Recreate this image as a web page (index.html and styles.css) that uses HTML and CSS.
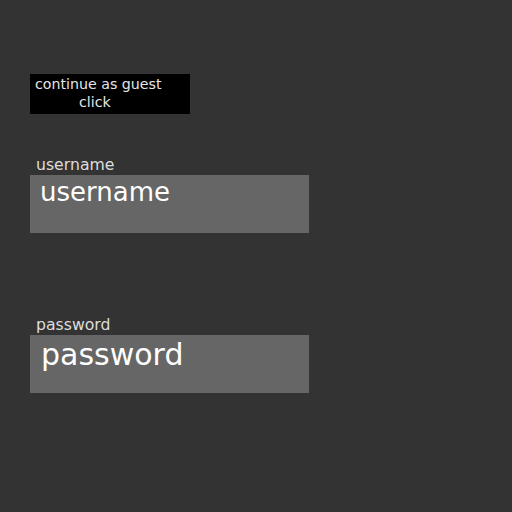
FILE: index.html
```html
<!DOCTYPE html>
<html>
<head>
<meta charset="utf-8">
<link rel="stylesheet" href="styles.css">
</head>
<body>
<div class="page">
  <div class="guest">
    <div class="guest-line">continue as guest</div>
    <div class="guest-line guest-click">click</div>
  </div>
  <div class="field field-user">
    <label class="label" for="u">username</label>
    <input id="u" class="input input-user" type="text" value="username">
  </div>
  <div class="field field-pass">
    <label class="label" for="p">password</label>
    <input id="p" class="input input-pass" type="text" value="password">
  </div>
</div>
</body>
</html>
```
FILE: styles.css
```css
html, body {
  margin: 0;
  padding: 0;
  background: #333333;
  width: 512px;
  height: 512px;
  overflow: hidden;
}
.page {
  display: flex;
  flex-direction: column;
  align-items: flex-start;
  padding: 74px 30px 0 30px;
  font-family: "DejaVu Sans", sans-serif;
}
.guest {
  width: 160px;
  height: 40px;
  box-sizing: border-box;
  background: #000;
  color: #e6e6e6;
  font-size: 14.2px;
  line-height: 18px;
  padding-top: 1px;
}
.guest-line {
  padding-left: 5px;
  white-space: nowrap;
}
.guest-click {
  padding-left: 49px;
}
.field {
  display: flex;
  flex-direction: column;
  align-items: flex-start;
}
.field-user {
  margin-top: 42px;
}
.field-pass {
  margin-top: 83px;
}
.label {
  font-size: 15.7px;
  line-height: 18px;
  color: #dddddd;
  padding-left: 6px;
  margin-bottom: 1px;
}
.input {
  width: 279px;
  height: 58px;
  box-sizing: border-box;
  border: none;
  outline: none;
  margin: 0;
  background: #666666;
  color: #ffffff;
  font-family: "DejaVu Sans", sans-serif;
}
.input-user {
  font-size: 26px;
  padding: 2px 10px 26px 10px;
}
.input-pass {
  font-size: 30px;
  padding: 2px 11px 22px 11px;
}
```
